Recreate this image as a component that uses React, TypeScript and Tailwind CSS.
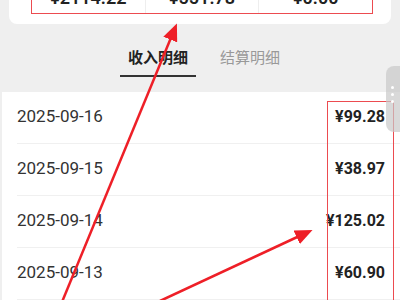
import React from 'react';

const rows = [
  { date: '2025-09-16', amount: '¥99.28' },
  { date: '2025-09-15', amount: '¥38.97' },
  { date: '2025-09-14', amount: '¥125.02' },
  { date: '2025-09-13', amount: '¥60.90' },
];

export default function App() {
  return (
    <div className="relative h-[300px] w-[400px] overflow-hidden bg-[#efefef] font-['Roboto','Noto_Sans_CJK_SC',sans-serif]">
      {/* summary card, mostly scrolled off */}
      <div className="mx-[9px] -mt-[38px] rounded-b-[8px] bg-white pb-[10px] pl-[22px] pr-[18px]">
        <div className="flex h-[52px] border border-[#ec4b50]">
          {['¥2114.22', '¥551.78', '¥0.00'].map((v, i) => (
            <div
              key={v}
              className={`flex flex-1 items-end justify-center pb-[6px] ${i > 0 ? 'border-l border-[#eeeeee]' : ''}`}
            >
              <span className="text-[18px] font-semibold leading-none text-[#222]">{v}</span>
            </div>
          ))}
        </div>
      </div>

      {/* tabs */}
      <div className="mt-[24px] flex justify-center gap-[16px] pl-[8px]">
        <div className="border-b-2 border-[#333] px-[8px] pb-[7px] text-[15px] font-bold leading-[20px] text-[#222]">
          收入明细
        </div>
        <div className="px-[8px] pb-[7px] text-[15px] leading-[20px] text-[#999]">结算明细</div>
      </div>

      {/* list */}
      <div className="ml-[2px] mt-[15px] bg-white">
        {rows.map((r) => (
          <div key={r.date} className="ml-[15px] flex h-[52px] items-center justify-between border-b border-[#f0f0f0] pb-[2px] pr-[15px]">
            <span className="text-[17px] text-[#333]">{r.date}</span>
            <span className="text-[16px] font-bold text-[#222]">{r.amount}</span>
          </div>
        ))}
      </div>

      {/* highlight box on amounts */}
      <div className="absolute left-[327px] top-[101px] h-[210px] w-[67px] border border-[#ec4b50]" />

      {/* floating side handle */}
      <div className="absolute left-[386px] top-[66px] flex h-[66px] w-[20px] flex-col items-start gap-[4px] rounded-l-[8px] bg-[#c9c9c9]/70 pl-[5px] pt-[20px]">
        <span className="h-[3px] w-[3px] rounded-full bg-white" />
        <span className="h-[3px] w-[3px] rounded-full bg-white" />
        <span className="h-[3px] w-[3px] rounded-full bg-white" />
      </div>

      {/* annotation arrows */}
      <svg className="pointer-events-none absolute left-0 top-0" width="400" height="300" viewBox="0 0 400 300">
        <defs>
          <marker id="ah" markerWidth="7" markerHeight="6" refX="5" refY="3" orient="auto" markerUnits="strokeWidth">
            <path d="M0,0 L7,3 L0,6 Z" fill="#ee1f27" />
          </marker>
        </defs>
        <line x1="62" y1="302" x2="175" y2="28" stroke="#ee1f27" strokeWidth="2.5" markerEnd="url(#ah)" />
        <line x1="160" y1="301" x2="308" y2="232" stroke="#ee1f27" strokeWidth="2.5" markerEnd="url(#ah)" />
      </svg>
    </div>
  );
}
